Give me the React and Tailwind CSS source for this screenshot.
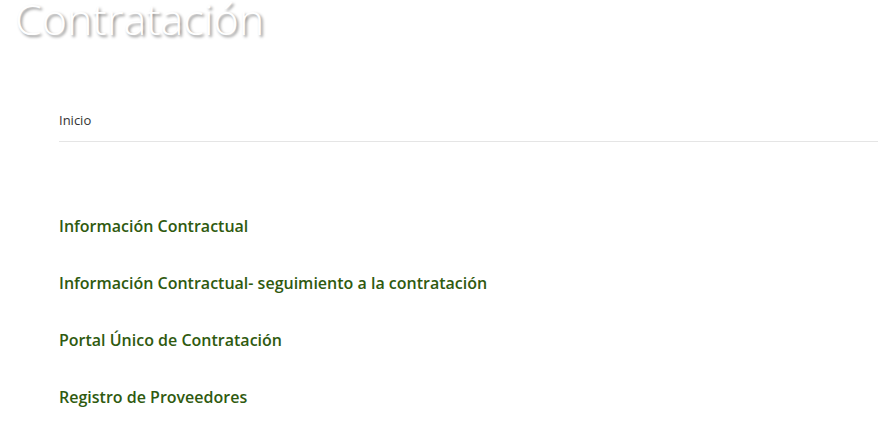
const links = [
  'Información Contractual',
  'Información Contractual- seguimiento a la contratación',
  'Portal Único de Contratación',
  'Registro de Proveedores',
];

export default function App() {
  return (
    <div className="w-[884px] h-[429px] overflow-hidden bg-white font-['Open_Sans',sans-serif]">
      <h1 className="pl-[15px] -mt-[9px] text-[43px] font-light leading-[56px] text-white [text-shadow:2px_2px_3px_rgba(0,0,0,0.45)]">
        Contratación
      </h1>

      <div className="ml-[59px] mr-[6px] mt-[60px]">
        <nav className="pb-[10px] border-b border-[#e5e5e5]">
          <span className="text-[13px] leading-[18px] text-[#333]">Inicio</span>
        </nav>

        <ul className="mt-[73px] flex flex-col gap-[35px]">
          {links.map((l) => (
            <li key={l} className="leading-[22px]">
              <a href="#" className="text-[16px] leading-[22px] font-semibold text-[#2f5a0f]">
                {l}
              </a>
            </li>
          ))}
        </ul>
      </div>
    </div>
  );
}
